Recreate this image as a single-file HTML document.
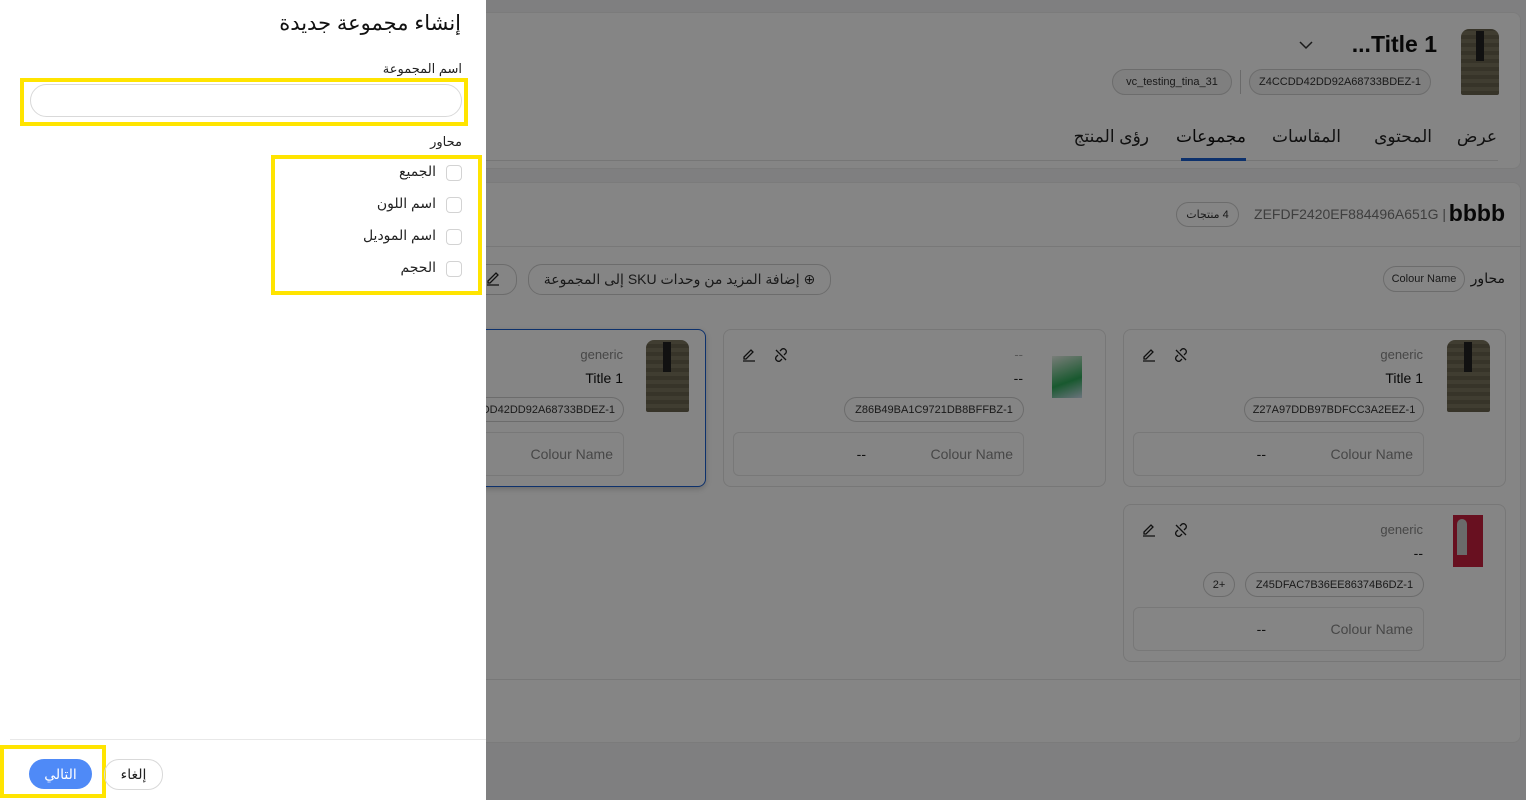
<!DOCTYPE html>
<html><head><meta charset="utf-8"><style>
*{box-sizing:border-box;margin:0;padding:0}
body{width:1526px;height:800px;overflow:hidden;position:relative;background:#f3f4f6;font-family:"Liberation Sans","DejaVu Sans",sans-serif;color:#222}
.a{position:absolute}
.t{position:absolute;white-space:nowrap;direction:rtl}
.l{position:absolute;white-space:nowrap;direction:ltr}
.panel{position:absolute;background:#fff;border:1px solid #ececec;border-radius:8px}
.chip{position:absolute;border:1px solid #cfcfcf;border-radius:14px;background:#f3f3f3;font-size:11px;color:#333;text-align:center;line-height:25px;white-space:nowrap;direction:ltr}
.card{position:absolute;background:#fff;border:1px solid #e4e4e4;border-radius:8px;width:383px;height:158px}
.jacket{position:absolute;background:repeating-linear-gradient(0deg,#6a6450 0 4px,#7c755e 4px 8px);border-radius:8px 8px 2px 2px}
.cb{position:absolute;width:16px;height:16px;border:1px solid #d3d3d3;border-radius:4px;background:#fff}
</style></head><body>

<div class="panel" style="left:420px;top:12px;width:1101px;height:157px"></div>
<div class="jacket" style="left:1461px;top:29px;width:38px;height:66px"></div>
<div class="a" style="left:1476px;top:31px;width:8px;height:30px;background:#222"></div>
<div class="l" style="right:89px;top:31px;font-size:23px;font-weight:bold;color:#111">...Title 1</div>
<svg class="a" style="left:1299px;top:40px" width="14" height="10"><path d="M1 2l6 6 6-6" fill="none" stroke="#333" stroke-width="1.5"/></svg>
<div class="chip" style="left:1249px;top:69px;width:182px;height:26px">Z4CCDD42DD92A68733BDEZ-1</div>
<div class="a" style="left:1240px;top:70px;width:1px;height:24px;background:#ccc"></div>
<div class="chip" style="left:1112px;top:69px;width:120px;height:26px">vc_testing_tina_31</div>
<div class="a" style="left:486px;top:160px;width:1012px;height:1px;background:#e3e3e3"></div>
<div class="t" style="right:29px;top:127px;font-size:17px;color:#222">عرض</div>
<div class="t" style="right:94px;top:127px;font-size:17px;color:#222">المحتوى</div>
<div class="t" style="right:185px;top:127px;font-size:17px;color:#222">المقاسات</div>
<div class="t" style="right:280px;top:127px;font-size:17px;color:#111">مجموعات</div>
<div class="a" style="left:1181px;top:158px;width:65px;height:3px;background:#1a5fd0"></div>
<div class="t" style="right:377px;top:127px;font-size:17px;color:#222">رؤى المنتج</div>

<div class="panel" style="left:420px;top:182px;width:1101px;height:561px"></div>
<div class="l" style="right:21px;top:200px;font-size:23px;font-weight:bold;color:#111">bbbb</div>
<div class="l" style="right:80px;top:206px;font-size:14px;color:#777">ZEFDF2420EF884496A651G |</div>
<div class="chip" style="left:1176px;top:202px;width:63px;height:25px;background:#fff;direction:rtl">4 منتجات</div>
<div class="a" style="left:486px;top:246px;width:1035px;height:1px;background:#e6e6e6"></div>
<div class="t" style="right:21px;top:270px;font-size:14px;color:#222">محاور</div>
<div class="chip" style="left:1383px;top:266px;width:82px;height:26px;background:#fff">Colour Name</div>
<div class="chip" style="left:528px;top:264px;width:303px;height:31px;line-height:29px;background:#fff;font-size:14px;direction:rtl">⊕ إضافة المزيد من وحدات SKU إلى المجموعة</div>
<div class="chip" style="left:470px;top:264px;width:47px;height:31px;background:#fff"></div>
<svg class="a" style="left:485px;top:269px" width="16" height="18"><path d="M3 12l8-8 2 2-8 8H3z M2 16h12" fill="none" stroke="#222" stroke-width="1.3"/></svg>

<div class="card" style="left:1123px;top:329px"></div>
<div class="card" style="left:723px;top:329px"></div>
<div class="card" style="left:323px;top:329px;border:1px solid #1a5fd0;box-shadow:0 2px 6px rgba(0,0,0,.2)"></div>
<div class="card" style="left:1123px;top:504px"></div>

<div class="jacket" style="left:1447px;top:340px;width:43px;height:72px"></div>
<div class="a" style="left:1464px;top:342px;width:8px;height:30px;background:#222"></div>
<div class="t" style="right:103px;top:347px;font-size:13px;color:#888">generic</div>
<div class="l" style="right:103px;top:370px;font-size:14px;color:#111">Title 1</div>
<div class="chip" style="left:1244px;top:397px;width:180px;height:25px;background:#fff">Z27A97DDB97BDFCC3A2EEZ-1</div>
<div class="a" style="left:1133px;top:432px;width:291px;height:44px;border:1px solid #e6e6e6;border-radius:6px"></div>
<div class="t" style="right:113px;top:446px;font-size:14px;color:#888">Colour Name</div>
<div class="t" style="right:260px;top:446px;font-size:14px;color:#222">--</div>

<div class="a" style="left:1052px;top:356px;width:30px;height:42px;background:linear-gradient(160deg,#e8f0e8,#2faa5a 60%,#cde)"></div>
<div class="t" style="right:503px;top:347px;font-size:13px;color:#aaa">--</div>
<div class="t" style="right:503px;top:370px;font-size:14px;color:#222">--</div>
<div class="chip" style="left:844px;top:397px;width:180px;height:25px;background:#fff">Z86B49BA1C9721DB8BFFBZ-1</div>
<div class="a" style="left:733px;top:432px;width:291px;height:44px;border:1px solid #e6e6e6;border-radius:6px"></div>
<div class="t" style="right:513px;top:446px;font-size:14px;color:#888">Colour Name</div>
<div class="t" style="right:660px;top:446px;font-size:14px;color:#222">--</div>

<div class="jacket" style="left:646px;top:340px;width:43px;height:72px"></div>
<div class="a" style="left:663px;top:342px;width:8px;height:30px;background:#222"></div>
<div class="t" style="right:903px;top:347px;font-size:13px;color:#888">generic</div>
<div class="l" style="right:903px;top:370px;font-size:14px;color:#111">Title 1</div>
<div class="chip" style="left:444px;top:397px;width:180px;height:25px;background:#fff">Z4CCDD42DD92A68733BDEZ-1</div>
<div class="a" style="left:333px;top:432px;width:291px;height:44px;border:1px solid #e6e6e6;border-radius:6px"></div>
<div class="t" style="right:913px;top:446px;font-size:14px;color:#888">Colour Name</div>

<div class="a" style="left:1453px;top:515px;width:30px;height:52px;background:#c8203f"></div>
<div class="a" style="left:1457px;top:519px;width:10px;height:36px;background:#ccc;border-radius:5px 5px 0 0"></div>
<div class="t" style="right:103px;top:522px;font-size:13px;color:#888">generic</div>
<div class="t" style="right:103px;top:545px;font-size:14px;color:#222">--</div>
<div class="chip" style="left:1245px;top:572px;width:179px;height:25px;background:#fff">Z45DFAC7B36EE86374B6DZ-1</div>
<div class="chip" style="left:1203px;top:572px;width:32px;height:25px;background:#fff">2+</div>
<div class="a" style="left:1133px;top:607px;width:291px;height:44px;border:1px solid #e6e6e6;border-radius:6px"></div>
<div class="t" style="right:113px;top:621px;font-size:14px;color:#888">Colour Name</div>
<div class="t" style="right:260px;top:621px;font-size:14px;color:#222">--</div>
<div class="a" style="left:486px;top:679px;width:1035px;height:1px;background:#e6e6e6"></div>

<svg class="a" style="left:1141px;top:347px" width="18" height="16"><path d="M3 10l7-7 2 2-7 7H3z M2 14h12" fill="none" stroke="#222" stroke-width="1.3"/></svg>
<svg class="a" style="left:1173px;top:347px" width="16" height="16"><path d="M7 4l2-2a3 3 0 014 4l-2 2M9 12l-2 2a3 3 0 01-4-4l2-2M5 5l6 6M3 3l10 10" fill="none" stroke="#222" stroke-width="1.3"/></svg>
<svg class="a" style="left:741px;top:347px" width="18" height="16"><path d="M3 10l7-7 2 2-7 7H3z M2 14h12" fill="none" stroke="#222" stroke-width="1.3"/></svg>
<svg class="a" style="left:773px;top:347px" width="16" height="16"><path d="M7 4l2-2a3 3 0 014 4l-2 2M9 12l-2 2a3 3 0 01-4-4l2-2M5 5l6 6M3 3l10 10" fill="none" stroke="#222" stroke-width="1.3"/></svg>
<svg class="a" style="left:1141px;top:522px" width="18" height="16"><path d="M3 10l7-7 2 2-7 7H3z M2 14h12" fill="none" stroke="#222" stroke-width="1.3"/></svg>
<svg class="a" style="left:1173px;top:522px" width="16" height="16"><path d="M7 4l2-2a3 3 0 014 4l-2 2M9 12l-2 2a3 3 0 01-4-4l2-2M5 5l6 6M3 3l10 10" fill="none" stroke="#222" stroke-width="1.3"/></svg>

<div class="a" style="left:0;top:0;width:1526px;height:800px;background:rgba(0,0,0,0.48)"></div>

<div class="a" style="left:0;top:0;width:486px;height:800px;background:#fff"></div>
<div class="t" style="right:1065px;top:11px;font-size:21px;color:#111">إنشاء مجموعة جديدة</div>
<div class="t" style="right:1064px;top:61px;font-size:13px;color:#222">اسم المجموعة</div>
<div class="a" style="left:20px;top:78px;width:448px;height:48px;border:4px solid #ffe400"></div>
<div class="a" style="left:30px;top:84px;width:432px;height:33px;border:1px solid #d9d9d9;border-radius:17px"></div>
<div class="t" style="right:1064px;top:134px;font-size:13px;color:#222">محاور</div>
<div class="a" style="left:271px;top:155px;width:211px;height:140px;border:4px solid #ffe400"></div>
<div class="cb" style="left:446px;top:165px"></div>
<div class="cb" style="left:446px;top:197px"></div>
<div class="cb" style="left:446px;top:229px"></div>
<div class="cb" style="left:446px;top:261px"></div>
<div class="t" style="right:1090px;top:163px;font-size:14px;color:#222">الجميع</div>
<div class="t" style="right:1090px;top:195px;font-size:14px;color:#222">اسم اللون</div>
<div class="t" style="right:1090px;top:227px;font-size:14px;color:#222">اسم الموديل</div>
<div class="t" style="right:1090px;top:259px;font-size:14px;color:#222">الحجم</div>
<div class="a" style="left:10px;top:739px;width:476px;height:1px;background:#e8e8e8"></div>
<div class="a" style="left:0;top:745px;width:106px;height:53px;border:4px solid #ffe400"></div>
<div class="a" style="left:29px;top:759px;width:63px;height:30px;background:#4f8af7;border-radius:15px;color:#fff;font-size:14px;text-align:center;line-height:30px;direction:rtl">التالي</div>
<div class="a" style="left:104px;top:759px;width:59px;height:31px;border:1px solid #d9d9d9;border-radius:15px;color:#222;font-size:14px;text-align:center;line-height:29px;direction:rtl">إلغاء</div>
</body></html>
